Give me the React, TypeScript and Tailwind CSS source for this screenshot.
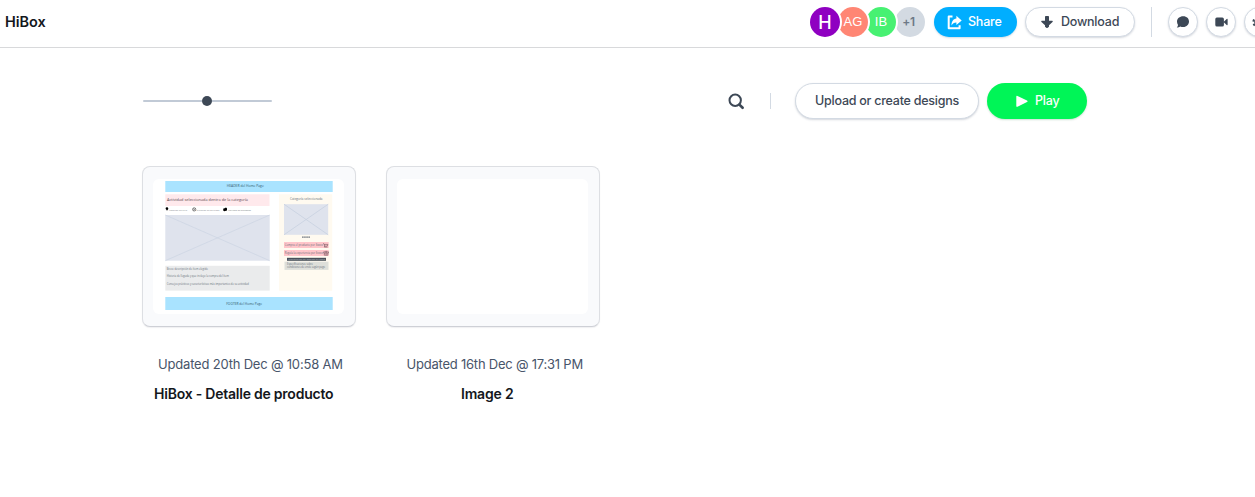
import React from "react";

const outline = "border border-[#d3dae3] bg-white shadow-[0_1px_2px_rgba(60,75,100,0.22)] rounded-full";

function ShareIcon() {
  return (
    <svg width="15" height="15" viewBox="0 0 15 15" fill="none" className="shrink-0">
      <path d="M5.5 1.5H1.7V13.3H12.6V10.2" stroke="white" strokeWidth="2" strokeLinejoin="round" />
      <path d="M9.4.8 14.7 5.4 9.4 10V7.4C7.2 7.3 5.6 8.5 4.5 10.6 4.4 6.4 6.2 3.8 9.4 3.4Z" fill="white" />
    </svg>
  );
}

function DownloadIcon() {
  return (
    <svg width="12" height="12" viewBox="0 0 12 12" className="shrink-0">
      <path d="M4 .8Q4 0 4.8 0H7.2Q8 0 8 .8V4.7H11.2Q12.3 4.9 11.5 5.9L8 9.3V10.8L6.7 11.8Q6 12.2 5.3 11.8L4 10.8V9.3L.5 5.9Q-.3 4.9.8 4.7H4Z" fill="#3d4856" />
    </svg>
  );
}

function ChatIcon() {
  return (
    <svg width="14" height="12" viewBox="0 0 14 12">
      <path d="M7.2.3C10.9.3 13 2.6 13 5.5S10.7 11 7.2 11C6 11 5.1 10.8 4.3 10.4 3.2 11.3 2 11.6.8 11.5 1.6 10.8 2 9.9 2 9 1.3 8 1 6.8 1 5.5 1 2.6 3.6.3 7.2.3Z" fill="#3d4856" />
    </svg>
  );
}

function VideoIcon() {
  return (
    <svg width="13" height="10" viewBox="0 0 13 10">
      <rect x="0.3" y="0.5" width="8.6" height="9" rx="1.5" fill="#3d4856" />
      <path d="M8.5 5 11.7 1.9Q12.6 1.4 12.6 2.4V7.6Q12.6 8.6 11.7 8.1Z" fill="#3d4856" />
    </svg>
  );
}

function GearIcon() {
  return (
    <svg width="14" height="14" viewBox="0 0 14 14" fill="none" stroke="#3d4856">
      <circle cx="7" cy="7" r="3.7" strokeWidth="2.2" />
      <circle cx="7" cy="7" r="5.6" strokeWidth="2" strokeDasharray="2.2 2.2" />
    </svg>
  );
}

function Wireframe() {
  return (
    <svg width="191" height="135" viewBox="153 179 191 135" fontFamily="'Open Sans', sans-serif" fill="#68707b">
      <rect x="165.3" y="181" width="167.4" height="11" fill="#a9e3ff" />
      <text x="226.8" y="187.4" fontSize="3.7" textLength="37" lengthAdjust="spacingAndGlyphs" fill="#31566b">HEADER del Home Page</text>

      <rect x="165.3" y="194.3" width="104.2" height="11.7" fill="#ffe9ec" />
      <text x="167" y="200.8" fontSize="4.2" textLength="81" lengthAdjust="spacingAndGlyphs" fill="#59484f">Actividad seleccionada dentro de la categoría</text>

      <path d="M167 210.8C166 209.5 165.6 209 165.6 208.6A1.3 1.3 0 0 1 168.3 208.6C168.3 209.2 167.8 209.7 167 210.8Z" fill="#000" />
      <text x="169" y="210.7" fontSize="2.5" textLength="18" lengthAdjust="spacingAndGlyphs" fill="#85898f">Locación del sitio</text>
      <circle cx="194.2" cy="209.4" r="1.6" fill="none" stroke="#333" strokeWidth=".6" />
      <path d="m193.3 208.5 1.8 1.8m0-1.8-1.8 1.8" stroke="#333" strokeWidth=".4" />
      <text x="196.5" y="210.7" fontSize="2.5" textLength="23" lengthAdjust="spacingAndGlyphs" fill="#85898f">Duración de actividad</text>
      <path d="M223.3 208.5h1l.7-.7h1.5l.5.7v2l-2.8.7-1-.8Z" fill="#000" />
      <text x="228" y="210.7" fontSize="2.5" textLength="23" lengthAdjust="spacingAndGlyphs" fill="#7b7f85">Máximo de personas</text>

      <rect x="165.3" y="215" width="104.4" height="45.7" fill="#dfe3ed" />
      <path d="M165.3 215 269.7 260.7M269.7 215 165.3 260.7" stroke="#cbd4e2" strokeWidth=".7" />

      <rect x="165.3" y="265.8" width="104.4" height="24.8" fill="#eaebec" />
      <text x="166.8" y="269.6" fontSize="3" textLength="41" lengthAdjust="spacingAndGlyphs">Breve descripción de ítem elegido</text>
      <text x="166.8" y="277.3" fontSize="3" textLength="62" lengthAdjust="spacingAndGlyphs">Historia de llegada y que incluye la compra del ítem</text>
      <text x="166.8" y="284.5" fontSize="3" textLength="82" lengthAdjust="spacingAndGlyphs">Consejos prácticos y características más importantes de su actividad</text>

      <rect x="279" y="194.3" width="53.2" height="96.4" fill="#fffaf0" />
      <text x="290" y="200.2" fontSize="3.6" textLength="32.5" lengthAdjust="spacingAndGlyphs">Categoría seleccionada</text>
      <rect x="284" y="204.2" width="44.2" height="30.6" fill="#dfe3ed" />
      <path d="m284 204.2 44.2 30.6M328.2 204.2 284 234.8" stroke="#c4cfde" strokeWidth=".7" />
      <path d="M302 237.1h8" stroke="#747a82" strokeWidth="1.4" strokeDasharray="1.7 .4" />

      <rect x="284" y="242" width="44.7" height="6" fill="#ffc5ca" />
      <text x="284.8" y="246" fontSize="3.1" textLength="38" lengthAdjust="spacingAndGlyphs">Compra el producto por $xxxx</text>
      <path d="m323.2 243.5.8.3.7 2.3h2.5l.7-1.7h-3.7M324.7 246.1l-.4 1h3.3" fill="none" stroke="#58434a" strokeWidth=".5" />
      <rect x="284" y="250" width="44.7" height="6" fill="#ffc5ca" />
      <text x="284.8" y="254.1" fontSize="3.1" textLength="38" lengthAdjust="spacingAndGlyphs">Regala la experiencia por $xxxx</text>
      <path d="M323.7 251.8h4.8v1.2h-4.8ZM324.3 253v2.2h3.6V253M326.1 250.8v4.4" fill="none" stroke="#58434a" strokeWidth=".5" />
      <rect x="287" y="257.8" width="39" height="3" fill="#485059" />
      <text x="288" y="260.3" fontSize="2.5" textLength="37" lengthAdjust="spacingAndGlyphs" fill="#b5bcc4">Información de medios de pago</text>
      <rect x="284.5" y="261.7" width="44" height="8.2" fill="#dedfda" />
      <text x="287" y="265.1" fontSize="2.8" textLength="26" lengthAdjust="spacingAndGlyphs">Especificaciones sobre</text>
      <text x="287" y="268.3" fontSize="2.8" textLength="38" lengthAdjust="spacingAndGlyphs">condiciones de envío según pago</text>

      <rect x="165.3" y="297" width="167.4" height="13" fill="#a9e3ff" />
      <text x="226.2" y="304.5" fontSize="3.7" textLength="36" lengthAdjust="spacingAndGlyphs" fill="#31566b">FOOTER del Home Page</text>
    </svg>
  );
}

function Preview({ children }: { children?: React.ReactNode }) {
  return (
    <div className="h-[161px] w-[214px] rounded-lg border border-[#dddfe3] border-b-[#ced0d6] bg-[#f9fafc] pl-[10px] pt-3 shadow-[0_1px_1px_rgba(60,70,90,0.08)]">
      <div className="h-[135px] w-[191px] overflow-hidden rounded-md bg-white">{children}</div>
    </div>
  );
}

export default function App() {
  return (
    <div className="h-[497px] w-[1255px] overflow-hidden bg-white font-['Inter',sans-serif] text-[#3d4856]">
      <header className="flex h-12 items-start border-b border-[#d8d9db] pt-[7px]">
        <h1 className="ml-[5px] w-[805px] shrink-0 whitespace-nowrap text-[14.5px] font-semibold leading-[30px] tracking-[-0.05px] text-[#14171c]">HiBox</h1>
        <div className="flex w-[124px] shrink-0 font-['Liberation_Sans',sans-serif] text-white">
          <div className="z-30 flex size-[30px] shrink-0 items-center justify-center rounded-full bg-[#8f00c1] font-['Inter',sans-serif] text-[18px] font-medium ring-2 ring-white">H</div>
          <div className="z-20 -ml-[2px] flex size-[30px] shrink-0 items-center justify-center rounded-full bg-[#ff8674] text-[13px] ring-2 ring-white">AG</div>
          <div className="z-10 -ml-[2px] flex size-[30px] shrink-0 items-center justify-center rounded-full bg-[#47f172] text-[13px] ring-2 ring-white">IB</div>
          <div className="-ml-px flex size-[30px] shrink-0 items-center justify-center rounded-full bg-[#d3dae2] pr-[3px] font-['Inter',sans-serif] text-[12px] font-semibold tracking-[-0.3px] text-[#6e7987]">+1</div>
        </div>
        <button className="flex h-[30px] w-[83px] shrink-0 items-center rounded-full bg-[#00aeff] pl-[13px] text-[12.5px] font-medium tracking-[-0.2px] text-white shadow-[0_1px_2px_rgba(0,80,130,0.2)]">
          <ShareIcon /><span className="ml-[6px]">Share</span>
        </button>
        <button className={`${outline} ml-2 flex h-[30px] w-[110px] shrink-0 items-center pl-[15px] text-[12.5px] font-medium tracking-[-0.22px]`}>
          <DownloadIcon /><span className="ml-2">Download</span>
        </button>
        <div className="ml-4 h-[30px] w-px shrink-0 bg-[#d3dae3]" />
        <div className="ml-4 flex shrink-0 gap-2">
          <button className={`${outline} flex size-[30px] items-center justify-center`}><ChatIcon /></button>
          <button className={`${outline} flex size-[30px] items-center justify-center`}><VideoIcon /></button>
          <button className={`${outline} flex size-[30px] items-center justify-center`}><GearIcon /></button>
        </div>
      </header>

      <main className="pl-[142px] pt-[35px]">
        <div className="flex h-9 w-[945px] items-center">
          <div className="ml-px flex w-[129px] items-center">
            <span className="h-[2px] w-[59px] rounded-l bg-[#c1cad6]" />
            <span className="size-[10px] rounded-full bg-[#3d4856]" />
            <span className="h-[2px] w-[60px] rounded-r bg-[#c1cad6]" />
          </div>
          <svg className="ml-[456px] shrink-0" width="17" height="17" viewBox="0 0 17 17" fill="none" stroke="#3d4856">
            <circle cx="7.2" cy="7.2" r="5.7" strokeWidth="2" />
            <path d="m11.4 11.6 3.2 3.1" strokeWidth="2.7" strokeLinecap="round" />
          </svg>
          <div className="ml-[25px] h-4 w-px bg-[#d3dae3]" />
          <button className={`${outline} ml-6 flex h-9 w-[184px] items-center justify-center whitespace-nowrap text-[12.5px] font-medium tracking-[-0.25px]`}>Upload or create designs</button>
          <button className="ml-2 flex h-9 w-[100px] items-center rounded-full bg-[#00f557] pl-[29px] text-[12.5px] font-medium tracking-[-0.2px] text-white shadow-[0_1px_2px_rgba(0,100,40,0.2)]">
            <svg width="12" height="12" viewBox="0 0 12 12"><path d="M.3 1.7Q.3.5 1.5 1L11 5.6Q12.2 6.4 11 7.1L1.5 11.7Q.3 12.2.3 11Z" fill="white" /></svg>
            <span className="ml-[7px]">Play</span>
          </button>
        </div>

        <div className="mt-[47px] flex gap-[30px]">
          <article className="w-[214px]">
            <Preview><Wireframe /></Preview>
            <p className="ml-4 mt-[27px] whitespace-nowrap text-[13px] leading-5 tracking-[-0.19px] text-[#48556a]">Updated 20th Dec @ 10:58 AM</p>
            <h2 className="ml-[12px] mt-[10px] whitespace-nowrap text-[14px] font-semibold leading-5 tracking-[-0.23px] text-[#14171c]">HiBox - Detalle de producto</h2>
          </article>
          <article className="w-[214px]">
            <Preview />
            <p className="ml-[20.5px] mt-[27px] whitespace-nowrap text-[13px] leading-5 tracking-[-0.22px] text-[#48556a]">Updated 16th Dec @ 17:31 PM</p>
            <h2 className="ml-[75px] mt-[10px] whitespace-nowrap text-[14px] font-semibold leading-5 tracking-[-0.2px] text-[#14171c]">Image 2</h2>
          </article>
        </div>
      </main>
    </div>
  );
}
